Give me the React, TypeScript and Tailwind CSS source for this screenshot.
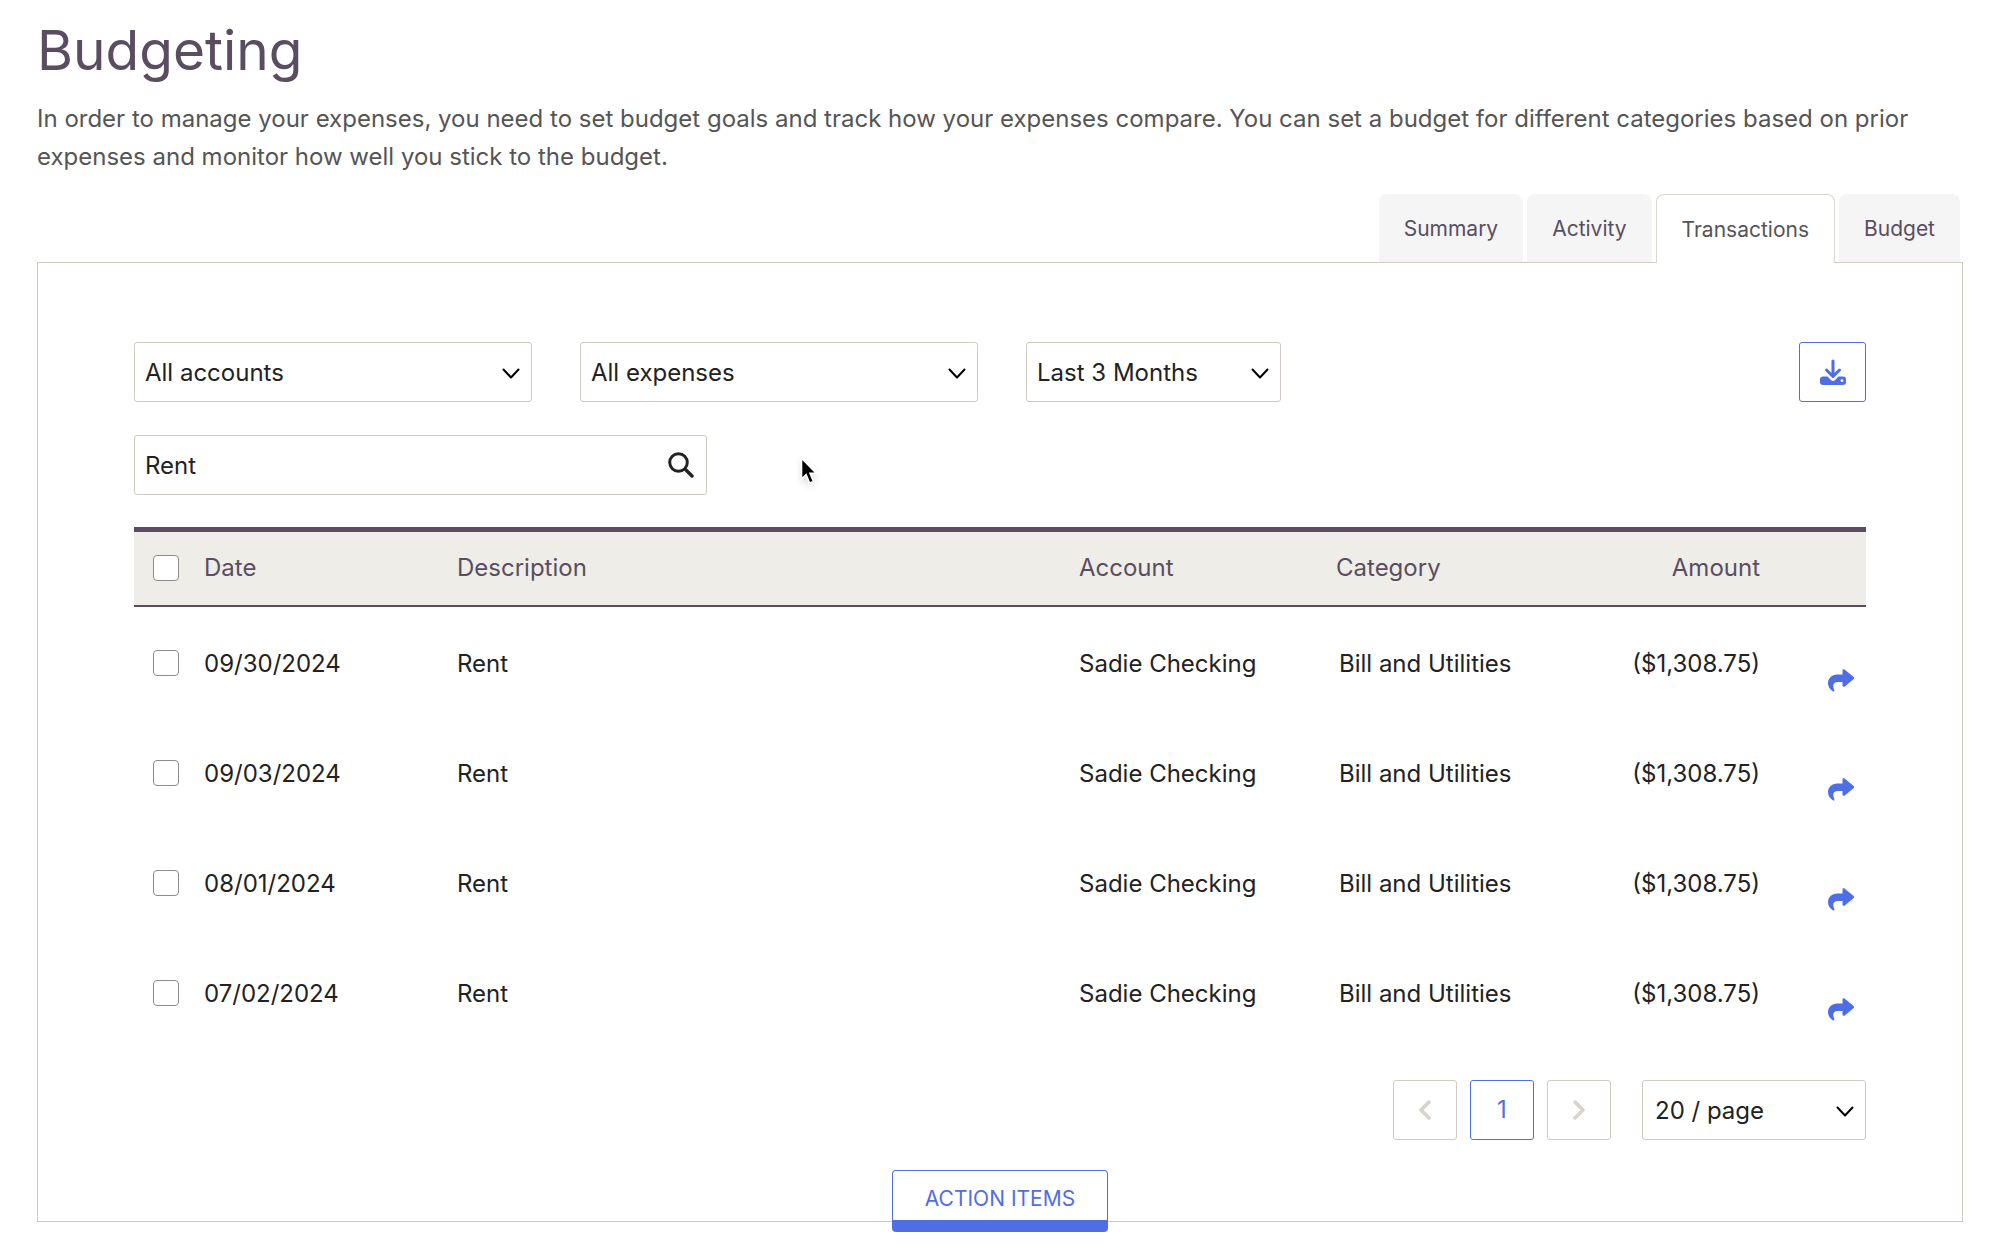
import React, { useState } from 'react';
import clsx from 'clsx';

const tabs = ['Summary', 'Activity', 'Transactions', 'Budget'];

const transactions = [
    { date: '09/30/2024', description: 'Rent', account: 'Sadie Checking', category: 'Bill and Utilities', amount: '($1,308.75)' },
    { date: '09/03/2024', description: 'Rent', account: 'Sadie Checking', category: 'Bill and Utilities', amount: '($1,308.75)' },
    { date: '08/01/2024', description: 'Rent', account: 'Sadie Checking', category: 'Bill and Utilities', amount: '($1,308.75)' },
    { date: '07/02/2024', description: 'Rent', account: 'Sadie Checking', category: 'Bill and Utilities', amount: '($1,308.75)' },
];

const Chevron: React.FC<{ className?: string }> = ({ className }) => (
    <svg viewBox="0 0 18 12" fill="none" stroke="currentColor" strokeLinecap="round" strokeLinejoin="round" className={className}>
        <path d="M1.5 1.5 9 9.5l7.5-8" strokeWidth="2" />
    </svg>
);

const PageArrow: React.FC<{ next?: boolean }> = ({ next }) => (
    <svg viewBox="0 0 12 20" fill="none" stroke="currentColor" strokeWidth="3.5" strokeLinecap="round" strokeLinejoin="round" className="h-5 w-3">
        <path d={next ? 'M2 2l8 8-8 8' : 'M10 2l-8 8 8 8'} />
    </svg>
);

const DownloadIcon: React.FC = () => (
    <svg viewBox="0 0 26 26" className="h-[26px] w-[26px]">
        <path d="M13 2v15M6.500 11l6.500 6.500 6.500-6.500" fill="none" stroke="currentColor" strokeWidth="3" strokeLinecap="round" strokeLinejoin="round" />
        <path
            fillRule="evenodd"
            fill="currentColor"
            d="M3 17.500h4.500l3.400 3.400a3 3 0 0 0 4.200 0l3.400-3.400H23a3 3 0 0 1 3 3V23a3 3 0 0 1-3 3H3a3 3 0 0 1-3-3v-2.500a3 3 0 0 1 3-3zm19 2.800a1.400 1.400 0 1 0 0 2.800 1.400 1.400 0 0 0 0-2.800z"
        />
    </svg>
);

const SearchIcon: React.FC = () => (
    <svg viewBox="0 0 26 26" fill="none" stroke="currentColor" strokeLinecap="round" className="h-[26px] w-[26px]">
        <circle cx="10.500" cy="10.500" r="8.800" strokeWidth="3" />
        <path d="M17.500 17.500l6.500 6.500" strokeWidth="3.400" />
    </svg>
);

const ShareIcon: React.FC = () => (
    <svg viewBox="0 0 26 23" fill="currentColor" className="h-[23px] w-[26px]">
        <path d="M14.5 5.500V1.600C14.500.200 16 0 16.800.700l8.600 7.100a1.600 1.600 0 0 1 0 2.400l-8.600 7.200c-.8.700-2.300.400-2.300-1V12.900H10c-3.500 0-5.200 2-4.600 5.200.3 1.600.8 2.500 1 3.300.2 1-.6 1.500-1.300 1C2 20.500 0 17.500 0 14.200 0 9 4 5.500 9 5.500z" />
    </svg>
);

interface SelectProps {
    label: string;
    value: string;
    className: string;
    padding?: string;
}

const Select: React.FC<SelectProps> = ({ label, value, className, padding = 'pl-2.5' }) => (
    <div className={clsx('relative', className)}>
        <select
            aria-label={label}
            className={clsx('h-[60px] w-full appearance-none rounded-[3px] border border-[#cfcbc2] bg-white pr-12 pt-0.5 text-2xl text-[#222222]', padding)}
        >
            <option>{value}</option>
        </select>
        <Chevron className="pointer-events-none absolute right-3 top-[26px] h-3 w-[18px] text-black" />
    </div>
);

const Checkbox: React.FC<{ label: string }> = ({ label }) => (
    <input type="checkbox" aria-label={label} className="block h-[26px] w-[26px] appearance-none rounded border border-[#8c8c8c] bg-white checked:bg-[#4f6ee5]" />
);

const TransactionTable: React.FC = () => (
    <table className="mt-8 w-full table-fixed border-collapse text-left text-2xl">
        <colgroup>
            <col className="w-[70px]" />
            <col className="w-[253px]" />
            <col />
            <col className="w-[257px]" />
            <col className="w-[240px]" />
            <col className="w-[184px]" />
            <col className="w-[106px]" />
        </colgroup>
        <thead>
            <tr className="h-[76px] border-b-2 border-t-[5px] border-[#5a4d61] bg-[#eeede8] text-[#5a4d61]">
                <th className="pl-[19px]"><Checkbox label="Select all" /></th>
                <th className="font-normal">Date</th>
                <th className="font-normal">Description</th>
                <th className="font-normal">Account</th>
                <th className="font-normal">Category</th>
                <th className="text-right font-normal">Amount</th>
                <th></th>
            </tr>
        </thead>
        <tbody className="text-[#222222]">
            {transactions.map((t) => (
                <tr key={t.date} className="h-[110px]">
                    <td className="pl-[19px] pt-1"><Checkbox label={`Select ${t.date}`} /></td>
                    <td className="pt-1.5">{t.date}</td>
                    <td className="pt-1.5">{t.description}</td>
                    <td className="pt-1.5">{t.account}</td>
                    <td className="pl-[3px] pt-1.5">{t.category}</td>
                    <td className="pt-1.5 text-right">{t.amount}</td>
                    <td className="pr-3 pt-[38px]">
                        <button aria-label="Share" className="ml-auto block text-[#4f6ee5]">
                            <ShareIcon />
                        </button>
                    </td>
                </tr>
            ))}
        </tbody>
    </table>
);

const Pagination: React.FC = () => (
    <div className="mt-[34px] flex justify-end gap-[13px]">
        <button aria-label="Previous page" className="flex h-[60px] w-16 items-center justify-center rounded-[3px] border border-[#cfcbc2] text-[#d6d3cb]">
            <PageArrow />
        </button>
        <button className="h-[60px] w-16 rounded-[3px] border border-[#4f6ee5] text-2xl text-[#4f6ee5]">1</button>
        <button aria-label="Next page" className="flex h-[60px] w-16 items-center justify-center rounded-[3px] border border-[#cfcbc2] text-[#d6d3cb]">
            <PageArrow next />
        </button>
        <Select label="Page size" value="20 / page" className="ml-[18px] w-56" padding="pl-3" />
    </div>
);

const App: React.FC = () => {
    const [active, setActive] = useState('Transactions');
    const [search, setSearch] = useState('Rent');

    return (
        <main className="min-h-screen bg-white px-[37px] pb-6 pt-3.5 font-[Inter,sans-serif]">
            <h1 className="text-[55px] leading-[72px] text-[#5a4d61]">Budgeting</h1>
            <p className="mt-3.5 text-2xl leading-[38px] text-[#555555]">
                In order to manage your expenses, you need to set budget goals and track how your expenses compare. You can set a budget for different categories based on prior expenses and monitor how well you stick to the budget.
            </p>

            <nav className="relative z-10 mt-[18px] flex justify-end gap-1 pr-[3px]">
                {tabs.map((tab) => (
                    <button
                        key={tab}
                        onClick={() => setActive(tab)}
                        className={clsx(
                            'rounded-t-lg px-[25px] pt-0.5 text-[21px]',
                            active === tab
                                ? '-mb-px h-[69px] border border-b-0 border-[#dad7d0] bg-white text-[#555555]'
                                : 'h-[68px] bg-[#f5f5f5] text-[#5a4d61]'
                        )}
                    >
                        {tab}
                    </button>
                ))}
            </nav>

            <section className="border border-[#cfcbc2] px-24 pt-[79px]">
                <div className="flex gap-12">
                    <Select label="Account" value="All accounts" className="w-[398px]" />
                    <Select label="Expenses" value="All expenses" className="w-[398px]" />
                    <Select label="Period" value="Last 3 Months" className="w-[255px]" />
                    <button aria-label="Download" className="ml-auto flex h-[60px] w-[67px] items-center justify-center rounded-[3px] border border-[#4f6ee5] text-[#4f6ee5]">
                        <DownloadIcon />
                    </button>
                </div>

                <div className="relative mt-[33px] flex h-[60px] w-[573px] items-center rounded-[3px] border border-[#cfcbc2] pl-2.5 pr-3">
                    <input
                        aria-label="Search transactions"
                        value={search}
                        onChange={(e) => setSearch(e.target.value)}
                        className="min-w-0 flex-1 pt-0.5 text-2xl text-[#222222] outline-none"
                    />
                    <button aria-label="Search" className="text-[#222222]">
                        <SearchIcon />
                    </button>
                    {/* mouse pointer */}
                    <svg viewBox="0 0 18 28" className="absolute left-[664px] top-5 h-[30px] w-5 drop-shadow-md">
                        <path d="M2 2v19.500l4.300-4 3.200 7.700 3.700-1.500-3.200-7.500h6z" fill="#000" stroke="#fff" strokeWidth="1.500" />
                    </svg>
                </div>

                <TransactionTable />
                <Pagination />

                <div className="-mb-[11px] mt-[30px] flex justify-center">
                    <button className="h-[62px] w-[216px] rounded border border-b-[12px] border-[#4f6ee5] bg-white pt-2 text-[21px] text-[#4f6ee5]">
                        ACTION ITEMS
                    </button>
                </div>
            </section>
        </main>
    );
};

export default App;
